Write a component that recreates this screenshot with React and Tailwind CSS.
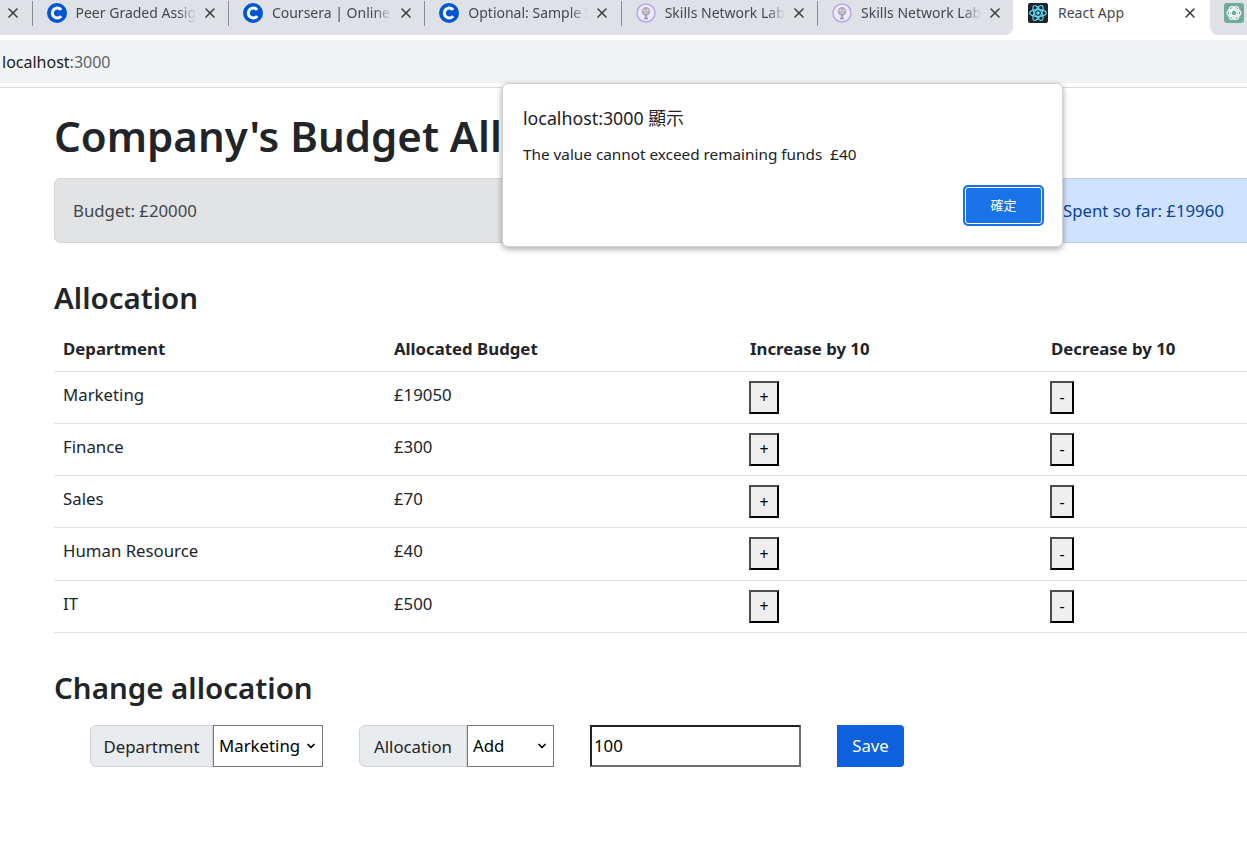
import React from 'react';
import { X, ChevronDown } from 'lucide-react';

const CourseraIcon = () => (
  <svg width="20" height="20" viewBox="0 0 20 20" className="shrink-0">
    <circle cx="10" cy="10" r="10" fill="#0056d2" />
    <path d="M14.2 6.9a5 5 0 1 0 0 6.2" fill="none" stroke="#fff" strokeWidth="3" />
  </svg>
);

const SkillsIcon = () => (
  <svg width="20" height="20" viewBox="0 0 20 20" className="shrink-0">
    <circle cx="10" cy="10" r="9" fill="#efeafb" stroke="#b9a6ea" strokeWidth="1.5" />
    <circle cx="10" cy="8.5" r="4.4" fill="#b4b0bd" />
    <circle cx="8.4" cy="7.4" r="0.8" fill="#efeafb" />
    <circle cx="11.6" cy="7.4" r="0.8" fill="#efeafb" />
    <circle cx="10" cy="10" r="0.8" fill="#efeafb" />
    <path d="M10 11v4.5M8 15.5h4" fill="none" stroke="#97939f" strokeWidth="1.4" />
  </svg>
);

const ReactIcon = () => (
  <svg width="20" height="20" viewBox="0 0 20 20" className="shrink-0">
    <rect width="20" height="20" rx="2" fill="#20232a" />
    <g fill="none" stroke="#61dafb" strokeWidth="1.2">
      <ellipse cx="10" cy="10" rx="8.4" ry="3.4" />
      <ellipse cx="10" cy="10" rx="8.4" ry="3.4" transform="rotate(60 10 10)" />
      <ellipse cx="10" cy="10" rx="8.4" ry="3.4" transform="rotate(120 10 10)" />
    </g>
    <circle cx="10" cy="10" r="1.8" fill="#61dafb" />
  </svg>
);

const GptIcon = () => (
  <svg width="20" height="20" viewBox="0 0 20 20" className="shrink-0">
    <rect width="20" height="20" rx="3" fill="#74aa9c" />
    <g fill="none" stroke="#fff" strokeWidth="1.1">
      <ellipse cx="10" cy="10" rx="7" ry="4" />
      <ellipse cx="10" cy="10" rx="7" ry="4" transform="rotate(60 10 10)" />
      <ellipse cx="10" cy="10" rx="7" ry="4" transform="rotate(120 10 10)" />
      <path d="M10 6.8l2.8 1.6v3.2L10 13.2l-2.8-1.6V8.4z" />
    </g>
  </svg>
);

const tabs = [
  { title: 'Peer Graded Assignment', icon: <CourseraIcon /> },
  { title: 'Coursera | Online Courses', icon: <CourseraIcon /> },
  { title: 'Optional: Sample Solution', icon: <CourseraIcon /> },
  { title: 'Skills Network Labs', icon: <SkillsIcon /> },
  { title: 'Skills Network Labs', icon: <SkillsIcon /> },
];

const rows = [
  ['Marketing', '£19050'],
  ['Finance', '£300'],
  ['Sales', '£70'],
  ['Human Resource', '£40'],
  ['IT', '£500'],
];

function Tab({ title, icon }) {
  return (
    <div className="flex h-[26px] w-[196.4px] shrink-0 items-center">
      <div className="h-[25px] w-px shrink-0 bg-[#8b8e93]" />
      <div className="ml-[14px] flex min-w-0 flex-1 items-center">
        {icon}
        <span className="ml-[9px] w-[120px] shrink-0 overflow-hidden whitespace-nowrap pb-[2px] text-[14px] text-[#45484d] [mask-image:linear-gradient(to_right,black_85%,transparent)]">
          {title}
        </span>
        <X size={16} strokeWidth={2.4} className="ml-[6px] shrink-0 text-[#3c4043]" />
      </div>
    </div>
  );
}

function RowButton({ label, className }) {
  return (
    <button className={`h-[33px] border-2 border-t-[#4d4d4d] border-l-[#4d4d4d] border-r-black border-b-black bg-[#efefef] text-[16px] text-black ${className}`}>
      {label}
    </button>
  );
}

function Select({ value, className }) {
  return (
    <div className={`relative ${className}`}>
      <select defaultValue={value} className="h-full w-full appearance-none rounded-none border border-[#767676] bg-white pl-[5px] text-black">
        <option>{value}</option>
      </select>
      <ChevronDown size={12} strokeWidth={3.5} className="pointer-events-none absolute right-[6px] top-[15px] text-black" />
    </div>
  );
}

export default function App() {
  return (
    <div className="relative h-[847px] w-[1247px] overflow-hidden bg-white font-['Noto_Sans','Noto_Sans_CJK_TC',sans-serif] text-[#212529]">
      {/* Browser tabs */}
      <div className="flex h-[35px]">
        <div className="flex h-[35px] w-[1013px] shrink-0 items-start rounded-br-[8px] bg-[#dee1e6]">
          <div className="flex h-[26px] w-[31.5px] shrink-0 items-center justify-end pr-[11px]">
            <X size={16} strokeWidth={2.4} className="text-[#3c4043]" />
          </div>
          {tabs.map((tab, i) => (
            <Tab key={i} title={tab.title} icon={tab.icon} />
          ))}
        </div>
        <div className="flex w-[197px] shrink-0 items-start bg-white pl-[15px] pt-[3px]">
          <ReactIcon />
          <span className="ml-[10px] w-[124px] text-[14px] leading-[20px] text-[#45484d]">React App</span>
          <X size={16} strokeWidth={2.4} className="mt-[2px] text-[#3c4043]" />
        </div>
        <div className="flex flex-1 items-start rounded-bl-[8px] bg-[#dee1e6] pl-[14px] pt-[3px]">
          <GptIcon />
        </div>
      </div>
      <div className="h-[5px] bg-white" />

      {/* Address bar */}
      <div className="flex h-[43px] items-center bg-[#f1f3f4] pl-[2px] text-[16px] text-[#202124]">
        localhost<span className="text-[#5f6368]">:3000</span>
      </div>
      <div className="h-[5px] border-b border-[#dcdcdc] bg-white" />

      {/* Page */}
      <div className="w-[1300px] pl-[54px]">
        <h1 className="mt-[24px] text-[42px] font-semibold leading-[48px]">Company's Budget Allocation</h1>
        <div className="mt-[18px] flex h-[65px] text-[16.8px]">
          <div className="flex w-[460px] items-center rounded-[6px] border border-[#d3d6d8] bg-[#e2e3e5] pl-[18px] text-[#41464b]">
            Budget: £20000
          </div>
          <div className="ml-[24px] w-[460px]" />
          <div className="ml-[24px] flex flex-1 items-center rounded-l-[6px] border border-[#b6d4fe] bg-[#cfe2ff] pl-[40px] text-[#084298]">
            Spent so far: £19960
          </div>
        </div>

        <h2 className="mt-[36px] text-[29.5px] font-semibold leading-[38px]">Allocation</h2>

        <table className="mt-[9px] w-[1246px] table-fixed border-collapse text-left text-[16.8px]">
          <colgroup>
            <col className="w-[331px]" />
            <col className="w-[356px]" />
            <col className="w-[301px]" />
            <col />
          </colgroup>
          <thead>
            <tr className="h-[45px] border-b border-[#dee2e6]">
              <th className="px-[9px] font-bold">Department</th>
              <th className="px-[9px] font-bold">Allocated Budget</th>
              <th className="px-[9px] font-bold">Increase by 10</th>
              <th className="px-[9px] font-bold">Decrease by 10</th>
            </tr>
          </thead>
          <tbody>
            {rows.map(([name, budget]) => (
              <tr key={name} className="h-[52.3px] border-b border-[#dee2e6] align-top">
                <td className="px-[9px] pt-[10px]">{name}</td>
                <td className="px-[9px] pt-[10px]">{budget}</td>
                <td className="px-[8px] pt-[9px]"><RowButton label="+" className="w-[30px]" /></td>
                <td className="px-[8px] pt-[9px]"><RowButton label="-" className="w-[24px]" /></td>
              </tr>
            ))}
          </tbody>
        </table>

        <h2 className="mt-[36px] text-[29.5px] font-semibold leading-[38px]">Change allocation</h2>

        <div className="ml-[36px] mt-[18px] flex h-[42px] items-stretch text-[16.8px]">
          <span className="flex w-[123px] items-center justify-center rounded-l-[6px] border border-[#ced4da] bg-[#e9ecef] pt-[1px]">Department</span>
          <Select value="Marketing" className="w-[110px]" />
          <span className="ml-[36px] flex w-[108px] items-center justify-center rounded-l-[6px] border border-[#ced4da] bg-[#e9ecef] pt-[1px]">Allocation</span>
          <Select value="Add" className="w-[87px]" />
          <input
            defaultValue="100"
            className="ml-[36px] w-[211px] border-2 border-t-[#222] border-l-[#222] border-r-[#6d6d6d] border-b-[#6d6d6d] pl-[2px] text-black"
          />
          <button className="ml-[36px] w-[67px] rounded-r-[4px] bg-[#0d61dc] text-white">Save</button>
        </div>
      </div>

      {/* Alert dialog */}
      <div className="absolute left-[502px] top-[83px] flex h-[164px] w-[561px] flex-col rounded-[6px] border border-[#d0d0d0] bg-white pl-[20px] pr-[18px] pt-[22px] shadow-[0_2px_6px_rgba(0,0,0,0.35)]">
        <div className="text-[17.8px] leading-[24px] text-[#202124]">localhost:3000 顯示</div>
        <div className="mt-[14px] whitespace-pre text-[15.3px] leading-[20px] text-[#202124]">The value cannot exceed remaining funds  £40</div>
        <div className="mt-[21px] flex justify-end">
          <button className="h-[41px] w-[81px] rounded-[5px] border-2 border-[#1a73e8] bg-[#1a73e8] text-[13px] text-white outline outline-1 -outline-offset-3 outline-white">
            確定
          </button>
        </div>
      </div>
    </div>
  );
}
